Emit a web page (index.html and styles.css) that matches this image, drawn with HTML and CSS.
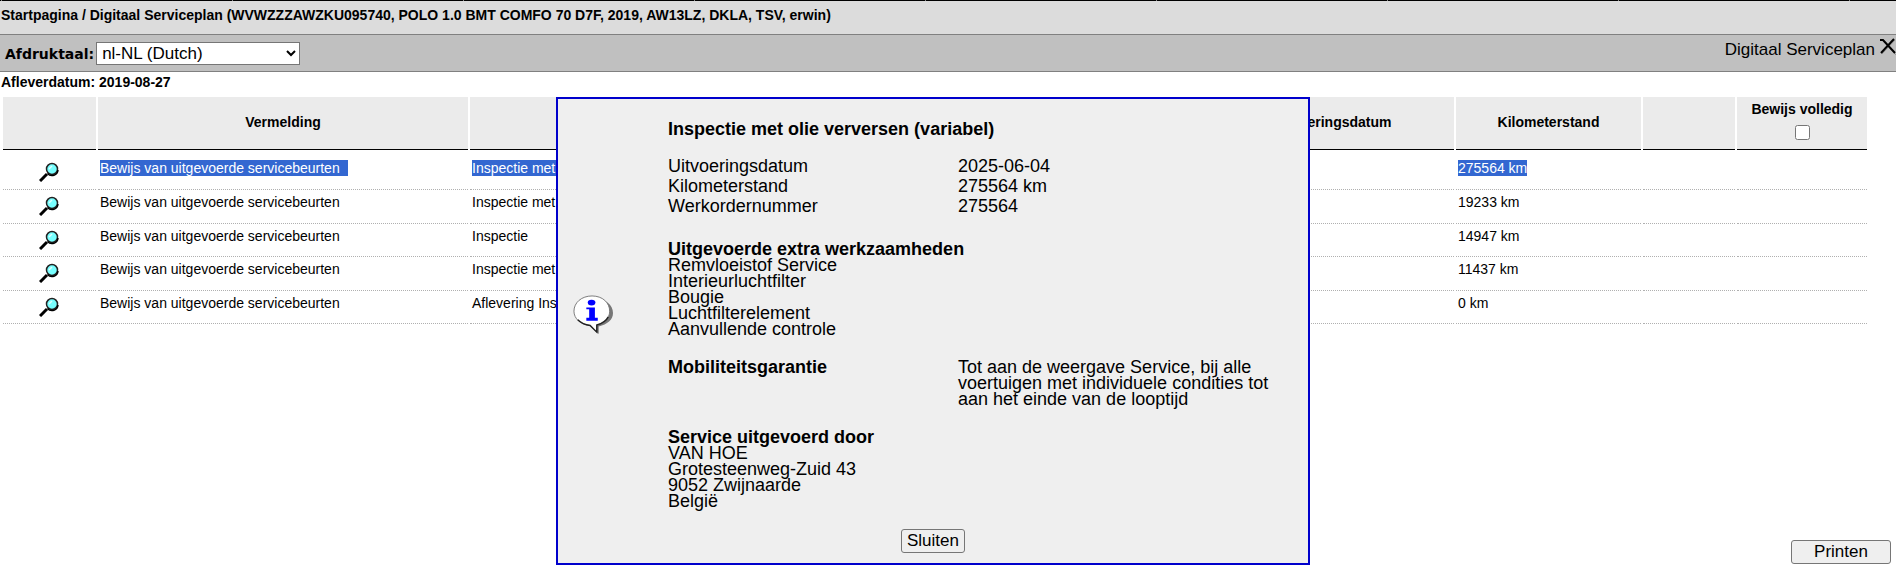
FILE: index.html
```html
<!DOCTYPE html>
<html lang="nl">
<head>
    <meta charset="UTF-8">
    <meta name="viewport" content="width=device-width, initial-scale=1.0">
    <title>Digitaal Serviceplan</title>
    <link rel="stylesheet" href="styles.css">
</head>
<body>
    <svg class="sprite" aria-hidden="true">
        <symbol id="magnifier" viewBox="0 0 20 20">
            <path d="M1 19 L8 12" stroke="#000" stroke-width="3"/>
            <circle cx="13" cy="7" r="5.5" fill="#7ff" stroke="#222" stroke-width="1.5"/>
            <path d="M8.500 11.500 A6 6 0 0 0 19 8" fill="none" stroke="#000" stroke-width="1.500"/>
            <path d="M10 7 L13 4" stroke="#dff" stroke-width="1.500"/>
        </symbol>
    </svg>

    <div class="top-line"></div>
    <header class="breadcrumb">Startpagina / Digitaal Serviceplan (WVWZZZAWZKU095740, POLO 1.0 BMT COMFO 70 D7F, 2019, AW13LZ, DKLA, TSV, erwin)</header>

    <div class="toolbar">
        <label for="language">Afdruktaal:</label>
        <select id="language">
            <option>nl-NL (Dutch)</option>
        </select>
        <span class="page-name">Digitaal Serviceplan</span>
        <button class="close" aria-label="Sluiten">
            <svg width="17" height="18" viewBox="0 0 17 18">
                <path d="M4 3 L17 17 M16 2 L3 16" stroke="#999" stroke-width="1"/>
                <path d="M1 2 L4 2 L16 15" fill="none" stroke="#000" stroke-width="2"/>
                <path d="M15 1 L2 15" stroke="#000" stroke-width="2"/>
            </svg>
        </button>
    </div>

    <main>
        <p class="delivery">Afleverdatum: 2019-08-27</p>
        <table class="services">
            <colgroup>
                <col class="col-icon">
                <col class="col-entry">
                <col>
                <col class="col-date">
                <col class="col-km">
                <col class="col-empty">
                <col class="col-proof">
            </colgroup>
            <thead>
                <tr>
                    <th></th>
                    <th>Vermelding</th>
                    <th></th>
                    <th>Uitvoeringsdatum</th>
                    <th>Kilometerstand</th>
                    <th></th>
                    <th><label class="proof">Bewijs volledig <input type="checkbox"></label></th>
                </tr>
            </thead>
            <tbody>
                <tr>
                    <td><svg class="lens"><use href="#magnifier"/></svg></td>
                    <td><span class="selected wide">Bewijs van uitgevoerde servicebeurten</span></td>
                    <td><span class="selected">Inspectie met olie</span></td>
                    <td></td>
                    <td><span class="selected">275564 km</span></td>
                    <td></td>
                    <td></td>
                </tr>
                <tr>
                    <td><svg class="lens"><use href="#magnifier"/></svg></td>
                    <td>Bewijs van uitgevoerde servicebeurten</td>
                    <td>Inspectie met</td>
                    <td></td>
                    <td>19233 km</td>
                    <td></td>
                    <td></td>
                </tr>
                <tr>
                    <td><svg class="lens"><use href="#magnifier"/></svg></td>
                    <td>Bewijs van uitgevoerde servicebeurten</td>
                    <td>Inspectie</td>
                    <td></td>
                    <td>14947 km</td>
                    <td></td>
                    <td></td>
                </tr>
                <tr>
                    <td><svg class="lens"><use href="#magnifier"/></svg></td>
                    <td>Bewijs van uitgevoerde servicebeurten</td>
                    <td>Inspectie met</td>
                    <td></td>
                    <td>11437 km</td>
                    <td></td>
                    <td></td>
                </tr>
                <tr>
                    <td><svg class="lens"><use href="#magnifier"/></svg></td>
                    <td>Bewijs van uitgevoerde servicebeurten</td>
                    <td>Aflevering Inspectie</td>
                    <td></td>
                    <td>0 km</td>
                    <td></td>
                    <td></td>
                </tr>
            </tbody>
        </table>

        <div class="overlay">
            <div class="dialog" role="dialog" aria-labelledby="dialogTitle">
                <div class="dialog-body">
                    <svg class="info" viewBox="0 0 42 42">
                        <path d="M22 4 C34 4 42 10 42 19 C42 26 36 31 27 33 L27 41 L20 34 Z" fill="#777"/>
                        <path d="M20 1 C31 1 38.500 8 38.500 17 C38.500 25 32 30 25 31.500 L25 39 L18 32 C8 31 1 25 1 17 C1 8 9 1 20 1 Z" fill="#fff" stroke="#777"/>
                        <path d="M5 26 Q10 31 18 32 L25 39 L25 31.500 Q34 29 37 23" fill="none" stroke="#222" stroke-width="1.500"/>
                        <ellipse cx="19.500" cy="8" rx="4" ry="3" fill="#00f"/>
                        <path d="M14 13 H23 V24 H26 V27 H14 V24 H17 V15 H14 Z" fill="#00f"/>
                    </svg>
                    <div class="details">
                        <h2 id="dialogTitle">Inspectie met olie verversen (variabel)</h2>
                        <dl class="facts">
                            <dt>Uitvoeringsdatum</dt><dd>2025-06-04</dd>
                            <dt>Kilometerstand</dt><dd>275564 km</dd>
                            <dt>Werkordernummer</dt><dd>275564</dd>
                        </dl>
                        <section>
                            <h2>Uitgevoerde extra werkzaamheden</h2>
                            <ul>
                                <li>Remvloeistof Service</li>
                                <li>Interieurluchtfilter</li>
                                <li>Bougie</li>
                                <li>Luchtfilterelement</li>
                                <li>Aanvullende controle</li>
                            </ul>
                        </section>
                        <section class="warranty">
                            <h2>Mobiliteitsgarantie</h2>
                            <p>Tot aan de weergave Service, bij alle voertuigen met individuele condities tot aan het einde van de looptijd</p>
                        </section>
                        <section>
                            <h2>Service uitgevoerd door</h2>
                            <address>VAN HOE<br>Grotesteenweg-Zuid 43<br>9052 Zwijnaarde<br>België</address>
                        </section>
                    </div>
                </div>
                <button class="btn">Sluiten</button>
            </div>
        </div>
    </main>

    <footer>
        <button class="btn print">Printen</button>
    </footer>
</body>
</html>
```
FILE: styles.css
```css
* {
    box-sizing: border-box;
}
body {
    margin: 0;
    min-height: 100vh;
    display: flex;
    flex-direction: column;
    font-family: Arial, "Liberation Sans", sans-serif;
    font-size: 14px;
    line-height: 16px;
    color: #000;
    background: #fff;
}
h2, p, dl, dd, ul {
    margin: 0;
    padding: 0;
}
.sprite {
    display: none;
}

/* header bars */
.top-line {
    height: 1px;
    background: linear-gradient(90deg, #888 1px, #000 1px) 1px 0 / 231px 1px;
}
.breadcrumb {
    height: 34px;
    padding: 6px 1px;
    font-weight: bold;
    background: #dcdcdc;
    border-bottom: 1px solid #808080;
}
.toolbar {
    display: flex;
    align-items: flex-start;
    height: 37px;
    padding: 7px 0 0 5px;
    background: #c0c0c0;
    border-bottom: 1px solid #808080;
}
.toolbar label {
    margin-right: 2px;
    font: bold 14px/24px "DejaVu Sans", Verdana, sans-serif;
}
.toolbar select {
    width: 204px;
    height: 23px;
    padding: 0 1px;
    font: 17px "Liberation Sans", Arial, sans-serif;
    color: #000;
    background-color: #fff;
    border: 1px solid #767676;
    border-radius: 0;
}
.page-name {
    margin-left: auto;
    font-size: 17px;
}
.close {
    width: 17px;
    height: 18px;
    margin: -4px 0 0 4px;
    padding: 0;
    border: 0;
    background: none;
}
.close svg {
    display: block;
}

/* service table */
main {
    position: relative;
}
.delivery {
    padding: 2px 1px 7px;
    font-weight: bold;
}
.services {
    width: calc(100% - 28px);
    margin-left: 1px;
    table-layout: fixed;
    border-collapse: separate;
    border-spacing: 2px 0;
}
.col-icon {
    width: 93px;
}
.col-entry {
    width: 370px;
}
.col-date {
    width: 244px;
}
.col-km {
    width: 185px;
}
.col-empty {
    width: 92px;
}
.col-proof {
    width: 130px;
}
th {
    height: 53px;
    padding: 0 0 3px;
    background: #ebebeb;
    border-bottom: 1px solid #000;
}
.proof {
    display: flex;
    flex-direction: column;
    align-items: center;
    gap: 8px;
    padding-bottom: 3px;
}
.proof input {
    width: 15px;
    height: 15px;
    margin: 0;
}
td {
    height: 33px;
    padding: 4px 2px 0;
    vertical-align: top;
    white-space: nowrap;
    overflow: hidden;
    border-bottom: 1px dotted #b0b0b0;
}
tr:nth-child(even) td {
    height: 34px;
}
tbody tr:first-child td {
    height: 40px;
    padding-top: 10px;
}
.lens {
    display: block;
    width: 20px;
    height: 20px;
    margin: 2px 0 0 34px;
}
.selected {
    color: #fff;
    background: #3367d1;
}
.wide {
    padding-right: 8px;
}

/* detail dialog */
.overlay {
    position: absolute;
    top: 25px;
    left: 0;
    right: 30px;
    display: flex;
    justify-content: center;
}
.dialog {
    width: 754px;
    padding: 22px 15px 10px;
    font-size: 18px;
    background: #efefef;
    border: 2px solid #00c;
    text-align: center;
}
.dialog-body {
    display: flex;
    align-items: center;
    gap: 55px;
    margin-bottom: 20px;
    text-align: left;
}
.info {
    flex: none;
    width: 40px;
    height: 40px;
}
.details {
    flex: 1;
    padding-right: 20px;
}
.dialog h2 {
    font-size: 18px;
    line-height: 16px;
}
.facts {
    display: grid;
    grid-template-columns: 290px 1fr;
    margin: 19px 0 25px;
    line-height: 20px;
}
.details section {
    margin-top: 22px;
}
.details ul {
    list-style: none;
}
.details address {
    font-style: normal;
}
.details .warranty {
    display: grid;
    grid-template-columns: 290px 1fr;
}
.btn {
    display: block;
    height: 24px;
    margin: 0 auto;
    padding: 0 5px;
    font: 17px "Liberation Sans", Arial, sans-serif;
    color: #000;
    background: #efefef;
    border: 1px solid #767676;
    border-radius: 3px;
}
footer {
    margin-top: auto;
    padding: 0 5px 1px;
}
.print {
    width: 100px;
    margin-right: 0;
}
```
